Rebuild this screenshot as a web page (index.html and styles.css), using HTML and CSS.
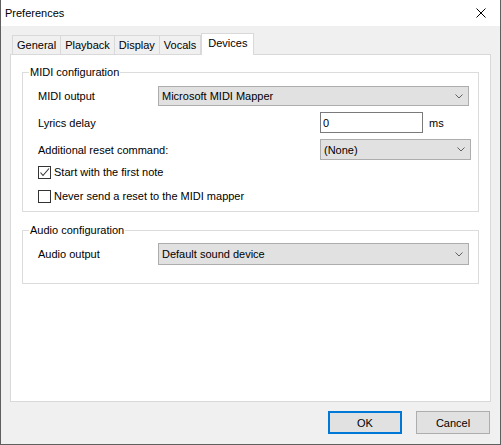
FILE: index.html
```html
<!DOCTYPE html>
<html lang="en">
<head>
    <meta charset="UTF-8">
    <title>Preferences</title>
    <link rel="stylesheet" href="styles.css">
</head>
<body>
    <div class="window">
        <div class="titlebar">
            <span class="title">Preferences</span>
            <button class="close" title="Close">
                <svg width="10" height="10" viewBox="0 0 10 10"><path d="M0.5 0.5 L9.5 9.5 M9.5 0.5 L0.5 9.5" stroke="#000" stroke-width="1" fill="none"/></svg>
            </button>
        </div>

        <div class="content">
            <!-- Abas -->
            <div class="tabs">
                <div class="tab">General</div>
                <div class="tab">Playback</div>
                <div class="tab">Display</div>
                <div class="tab">Vocals</div>
                <div class="tab active">Devices</div>
            </div>

            <div class="panel">
                <fieldset class="group midi">
                    <legend>MIDI configuration</legend>
                    <div class="row">
                        <span class="label">MIDI output</span>
                        <div class="select wide">
                            <span>Microsoft MIDI Mapper</span>
                            <svg class="chevron" width="8" height="5" viewBox="0 0 8 5"><path d="M0.5 0.5 L4 4 L7.5 0.5" stroke="#606060" fill="none"/></svg>
                        </div>
                    </div>
                    <div class="row">
                        <span class="label grow">Lyrics delay</span>
                        <div class="right-field">
                            <input class="text-input" type="text" value="0">
                            <span class="unit">ms</span>
                        </div>
                    </div>
                    <div class="row">
                        <span class="label grow">Additional reset command:</span>
                        <div class="select short">
                            <span>(None)</span>
                            <svg class="chevron" width="8" height="5" viewBox="0 0 8 5"><path d="M0.5 0.5 L4 4 L7.5 0.5" stroke="#606060" fill="none"/></svg>
                        </div>
                    </div>
                    <div class="check-row first">
                        <span class="box">
                            <svg width="11" height="11" viewBox="0 0 11 11"><path d="M1.5 5.5 L4 8.5 L10 1.5" stroke="#333" stroke-width="1.1" fill="none"/></svg>
                        </span>
                        <span>Start with the first note</span>
                    </div>
                    <div class="check-row">
                        <span class="box"></span>
                        <span>Never send a reset to the MIDI mapper</span>
                    </div>
                </fieldset>

                <fieldset class="group audio">
                    <legend>Audio configuration</legend>
                    <div class="row tall">
                        <span class="label">Audio output</span>
                        <div class="select wide">
                            <span>Default sound device</span>
                            <svg class="chevron" width="8" height="5" viewBox="0 0 8 5"><path d="M0.5 0.5 L4 4 L7.5 0.5" stroke="#606060" fill="none"/></svg>
                        </div>
                    </div>
                </fieldset>
            </div>

            <div class="buttons">
                <button class="btn default">OK</button>
                <button class="btn">Cancel</button>
            </div>
        </div>
    </div>
</body>
</html>
```

FILE: styles.css
```css
/* Janela geral */
body {
    margin: 0;
    font-family: 'Segoe UI', 'Liberation Sans', Arial, sans-serif;
    font-size: 11px;
    color: #000;
    background: #fff;
}

.window {
    width: 501px;
    height: 445px;
    box-sizing: border-box;
    border: 1px solid #5f5f5f;
    border-top: none;
    background: #f0f0f0;
    display: flex;
    flex-direction: column;
}

.titlebar {
    height: 26px;
    background: #fff;
    display: flex;
    align-items: center;
    justify-content: space-between;
    padding-left: 4px;
}

.title {
    line-height: 26px;
}

.close {
    width: 30px;
    height: 26px;
    margin-right: 4px;
    border: none;
    background: transparent;
    padding: 0;
    display: flex;
    align-items: center;
    justify-content: center;
}

.content {
    flex: 1;
    display: flex;
    flex-direction: column;
    padding: 7px 9px 0;
}

/* Abas */
.tabs {
    display: flex;
    align-items: flex-end;
    height: 21px;
    padding-left: 2px;
}

.tab {
    height: 19px;
    line-height: 18px;
    padding: 0 4px;
    border: 1px solid #d9d9d9;
    border-bottom: none;
    margin-right: -1px;
    box-sizing: border-box;
}

.tab.active {
    height: 22px;
    line-height: 19px;
    padding: 0 6px;
    margin-left: 1px;
    margin-bottom: -1px;
    background: #fff;
    position: relative;
    z-index: 1;
}

.panel {
    flex: 1;
    background: #fff;
    border: 1px solid #d9d9d9;
}

/* Caixas de grupo */
.group {
    border: 1px solid #dcdcdc;
    margin: 9px 11px 0;
    padding: 6px 0 8px 0;
}

.group legend {
    line-height: 16px;
    padding: 0 1px;
    margin-left: 6px;
}

.group.audio {
    margin-top: 10px;
    padding-top: 5px;
    padding-bottom: 18px;
}

.row {
    display: flex;
    align-items: center;
    height: 20px;
    margin: 0 0 6px 15px;
}

.row + .row {
    height: 21px;
}

.row.tall {
    height: 22px;
    margin-bottom: 0;
}

.label {
    width: 120px;
}

.label.grow {
    flex: 1;
}

.select {
    display: flex;
    align-items: center;
    justify-content: space-between;
    height: 100%;
    box-sizing: border-box;
    background: #e1e1e1;
    border: 1px solid #adadad;
    padding: 0 5px 0 3px;
}

.select.wide {
    flex: 1;
    margin-right: 9px;
}

.select.short {
    width: 151px;
    margin-right: 7px;
}

.right-field {
    width: 151px;
    margin-right: 7px;
    display: flex;
    align-items: center;
    height: 100%;
}

.text-input {
    width: 103px;
    height: 100%;
    box-sizing: border-box;
    border: 1px solid #7a7a7a;
    padding: 0 2px;
    font: inherit;
    outline: none;
}

.unit {
    margin-left: 6px;
}

/* Caixas de seleção */
.check-row {
    display: flex;
    align-items: center;
    height: 13px;
    line-height: 13px;
    margin: 11px 0 0 15px;
}

.check-row.first {
    margin-top: 4px;
}

.box {
    width: 13px;
    height: 13px;
    box-sizing: border-box;
    border: 1px solid #333;
    background: #fff;
    margin-right: 3px;
    display: flex;
    align-items: center;
    justify-content: center;
}

/* Botões */
.buttons {
    display: flex;
    justify-content: flex-end;
    gap: 14px;
    padding: 9px 1px 10px 0;
}

.btn {
    width: 74px;
    height: 23px;
    box-sizing: border-box;
    background: #e1e1e1;
    border: 1px solid #adadad;
    font: inherit;
    color: #000;
    padding: 0;
}

.btn.default {
    border: 2px solid #0078d7;
}
```
